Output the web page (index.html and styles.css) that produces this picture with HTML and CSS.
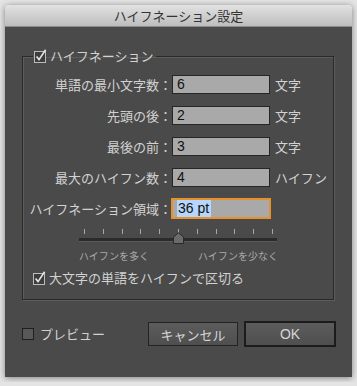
FILE: index.html
```html
<!DOCTYPE html>
<html lang="ja">
<head>
<meta charset="UTF-8" />
<meta name="viewport" content="width=device-width, initial-scale=1" />
<title>ハイフネーション設定</title>
<link rel="stylesheet" href="styles.css">
</head>
<body>
  <div class="dialog">
    <div class="titlebar">ハイフネーション設定</div>

    <div class="dialog-body">
      <!-- Hyphenation group -->
      <fieldset class="group">
        <legend class="group-title">
          <svg class="check" width="14" height="14" viewBox="0 0 14 14" aria-hidden="true">
            <rect x="0.5" y="2.5" width="11" height="11" fill="#3d3d3d" stroke="#bcbcbc" />
            <path d="M2.6 7.6 L5 10.6 L11.6 0.8" fill="none" stroke="#e4e4e4" stroke-width="1.6" />
          </svg>
          <span>ハイフネーション</span>
        </legend>

        <div class="fields">
          <label class="field-label">単語の最小文字数：</label>
          <div class="field-input">6</div>
          <span class="field-unit">文字</span>

          <label class="field-label">先頭の後：</label>
          <div class="field-input">2</div>
          <span class="field-unit">文字</span>

          <label class="field-label">最後の前：</label>
          <div class="field-input">3</div>
          <span class="field-unit">文字</span>

          <label class="field-label">最大のハイフン数：</label>
          <div class="field-input">4</div>
          <span class="field-unit">ハイフン</span>

          <label class="field-label">ハイフネーション領域：</label>
          <div class="field-input focused"><span class="selection">36 pt</span></div>
          <span class="field-unit"></span>
        </div>

        <div class="slider">
          <div class="ticks">
            <i></i><i></i><i></i><i></i><i></i><i></i><i></i><i></i><i></i><i></i><i></i>
          </div>
          <div class="track"></div>
          <svg class="thumb" width="13" height="13" viewBox="0 0 13 13" aria-hidden="true">
            <path d="M6.5 0.8 L11.5 5 L11.5 11.5 L1.5 11.5 L1.5 5 Z" fill="#6b6b6b" stroke="#2a2a2a" />
          </svg>
        </div>
        <div class="slider-labels">
          <span>ハイフンを多く</span>
          <span>ハイフンを少なく</span>
        </div>

        <div class="option">
          <svg class="check" width="14" height="14" viewBox="0 0 14 14" aria-hidden="true">
            <rect x="0.5" y="2.5" width="11" height="11" fill="#3d3d3d" stroke="#bcbcbc" />
            <path d="M2.6 7.6 L5 10.6 L11.6 0.8" fill="none" stroke="#e4e4e4" stroke-width="1.6" />
          </svg>
          <span>大文字の単語をハイフンで区切る</span>
        </div>
      </fieldset>

      <!-- Footer -->
      <div class="footer">
        <div class="preview">
          <span class="box"></span>
          <span>プレビュー</span>
        </div>
        <button class="btn">キャンセル</button>
        <button class="btn btn-default">OK</button>
      </div>
    </div>
  </div>
</body>
</html>
```

FILE: styles.css
```css
/* Reset and base styles */
* {
  margin: 0;
  padding: 0;
  box-sizing: border-box;
}
body {
  font-family: "Noto Sans CJK JP", "Liberation Sans", sans-serif;
  background: #e4e4e4;
  color: #d2d2d2;
  font-size: 13px;
}

/* Dialog window */
.dialog {
  margin: 5px;
  width: 347px;
  border-radius: 4px 4px 0 0;
  box-shadow: 0 1px 6px rgb(0 0 0 / 0.45);
  overflow: hidden;
}
.titlebar {
  height: 22px;
  line-height: 22px;
  text-align: center;
  font-size: 13px;
  color: #333;
  background: linear-gradient(#e2e2e2, #bdbdbd);
  border-bottom: 1px solid #8c8c8c;
}
.dialog-body {
  background: #4a4a4a;
  padding: 21px 0 30px;
}

/* Group box */
.group {
  margin: 0 18px 0 17px;
  border: 1px solid #2a2a2a;
  box-shadow: 1px 1px 0 #5c5c5c, inset 1px 1px 0 #5c5c5c;
  padding: 11px 0 13px;
  min-width: 0;
}
.group-title {
  margin-left: 10px;
  padding: 0 3px 0 1px;
  line-height: 16px;
  display: flex;
  align-items: center;
  gap: 2px;
}
.check {
  display: block;
  flex: none;
}

/* Number fields */
.fields {
  display: grid;
  grid-template-columns: 149px 98px 1fr;
  grid-auto-rows: 19px;
  row-gap: 12px;
  align-items: center;
}
.field-label {
  justify-self: end;
  line-height: 16px;
  white-space: nowrap;
}
.field-input {
  height: 19px;
  background: #a9a9a9;
  border: 1px solid #262626;
  font-family: "Liberation Sans", sans-serif;
  font-size: 14px;
  line-height: 17px;
  color: #111;
  padding-left: 4px;
}
.field-input.focused {
  border-color: #e8912c;
  box-shadow: 0 0 0 1px #e8912c;
}
.selection {
  background: #b6d6fb;
  padding: 0 2px 1px 1px;
}
.field-unit {
  padding-left: 5px;
  line-height: 16px;
  white-space: nowrap;
}

/* Hyphenation zone slider */
.slider {
  position: relative;
  margin: 11px 0 0 56px;
  width: 198px;
}
.ticks {
  display: flex;
  justify-content: space-between;
  padding: 0 4px 0 5px;
  height: 5px;
}
.ticks i {
  width: 1px;
  background: #a6a6a6;
}
.track {
  margin-top: 4px;
  height: 4px;
  background: #2b2b2b;
  border-bottom: 1px solid #5a5a5a;
}
.thumb {
  position: absolute;
  left: 93px;
  top: 3px;
}
.slider-labels {
  display: flex;
  justify-content: space-between;
  margin: 8px 0 0 56px;
  width: 199px;
  font-size: 10px;
  line-height: 12px;
  color: #a9a9a9;
}

/* Checkbox option */
.option {
  display: flex;
  align-items: center;
  gap: 2px;
  margin: 8px 0 0 10px;
  line-height: 16px;
}

/* Footer */
.footer {
  display: flex;
  align-items: center;
  margin-top: 21px;
  padding: 0 16px 0 17px;
  height: 26px;
}
.preview {
  display: flex;
  align-items: center;
  gap: 6px;
  flex: 1;
  line-height: 16px;
}
.preview .box {
  width: 12px;
  height: 12px;
  background: #585858;
  border: 1px solid #1f1f1f;
}
.btn {
  font-family: "Noto Sans CJK JP", "Liberation Sans", sans-serif;
  font-size: 13px;
  color: #d6d6d6;
  width: 90px;
  height: 24px;
  background: linear-gradient(#5c5c5c, #4f4f4f);
  border: 1px solid #232323;
}
.btn-default {
  width: 92px;
  height: 26px;
  margin-left: 6px;
  border: 2px solid #1c1c1c;
  font-family: "Liberation Sans", sans-serif;
  font-size: 14px;
}
```
